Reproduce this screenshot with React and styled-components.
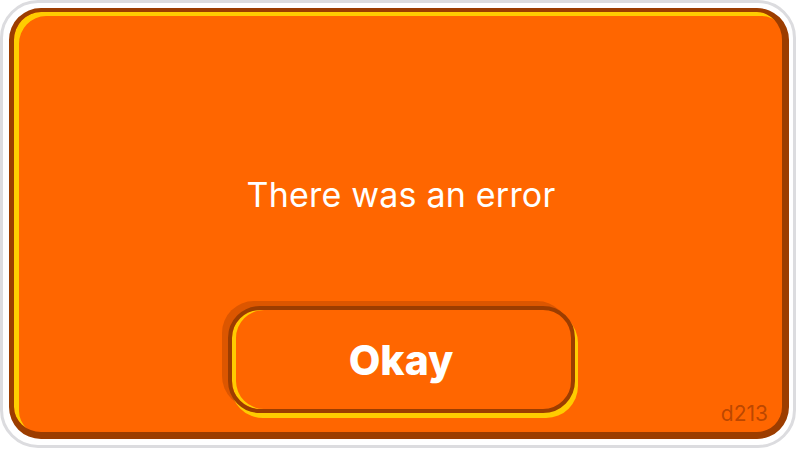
import React from 'react'
import styled, { createGlobalStyle } from 'styled-components'

const GlobalStyle = createGlobalStyle`
  html, body {
    margin: 0;
    padding: 0;
    background: #ffffff;
  }
  body {
    font-family: Inter, "Noto Sans", sans-serif;
  }
`

// white card with the thin grey rim
const Frame = styled.div`
  box-sizing: border-box;
  width: 796px;
  height: 448px;
  border: 3px solid #dcdcdf;
  border-radius: 38px;
  background: #ffffff;
  padding: 5px 4px 6px 6px;
  display: flex;
`

const Panel = styled.div`
  position: relative;
  box-sizing: border-box;
  flex: 1;
  display: flex;
  flex-direction: column;
  align-items: center;
  background: #ff6600;
  border-style: solid;
  border-color: #9c3d00;
  border-width: 4px 7px 7px 5px;
  border-radius: 32px;
  box-shadow: inset 5px 4px 0 #ffcc00;
  padding: 163px 0 0 6px;
`

const Message = styled.p`
  margin: 0;
  color: #ffffff;
  font-size: 34px;
  line-height: 40px;
  font-weight: 400;
  letter-spacing: 0.2px;
`

const OkayButton = styled.button`
  box-sizing: border-box;
  margin-top: 91px;
  width: 347px;
  height: 107px;
  border: 4px solid #9c3d00;
  border-radius: 32px;
  background: #ff6600;
  color: #ffffff;
  font-family: Inter, "Noto Sans", sans-serif;
  font-size: 41px;
  font-weight: 800;
  cursor: pointer;
  box-shadow:
    inset 4px 0 0 #ffcc00,
    3px 5px 0 #ffcc00,
    -6px -5px 0 rgba(140, 50, 0, 0.3);
`

const Code = styled.span`
  position: absolute;
  right: 14px;
  bottom: 6px;
  color: rgba(130, 45, 0, 0.55);
  font-size: 21px;
  line-height: 24px;
`

const App = () => {
  return (
    <>
      <GlobalStyle />
      <Frame>
        <Panel>
          <Message>There was an error</Message>
          <OkayButton>Okay</OkayButton>
          <Code>d213</Code>
        </Panel>
      </Frame>
    </>
  )
}

export default App
